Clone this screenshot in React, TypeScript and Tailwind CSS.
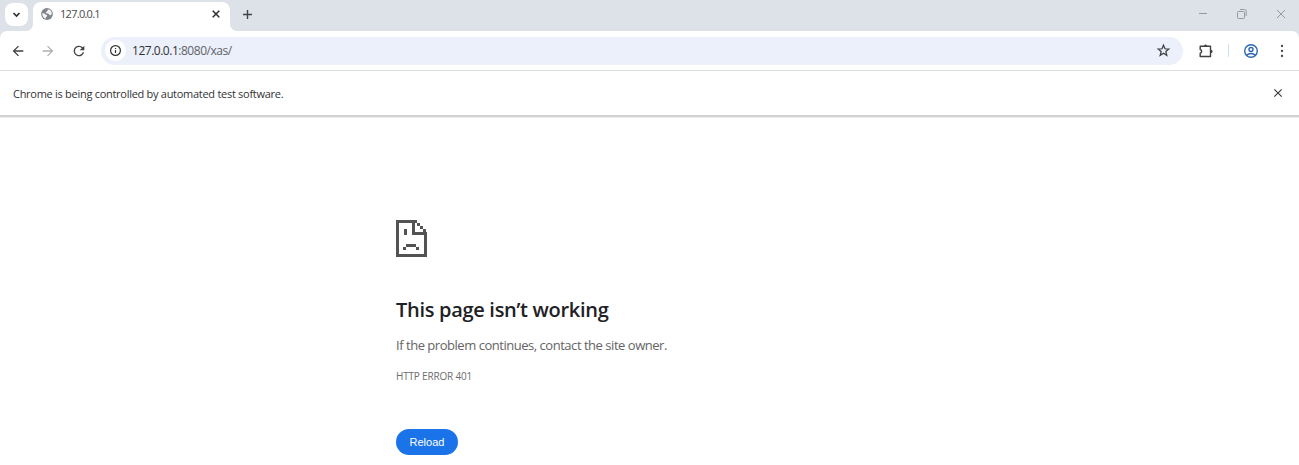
import type { ReactNode } from "react";

function Icon({ size, box = 24, className = "", children }: { size: number; box?: number; className?: string; children: ReactNode }) {
  return (
    <svg width={size} height={size} viewBox={`0 0 ${box} ${box}`} className={`shrink-0 ${className}`} fill="currentColor">
      {children}
    </svg>
  );
}

const CLOSE = "M19 6.41 17.59 5 12 10.59 6.41 5 5 6.41 10.59 12 5 17.59 6.41 19 12 13.41 17.59 19 19 17.59 13.41 12z";

function TabStrip() {
  return (
    <div className="flex h-[31px] items-end bg-[#dde1e8]">
      <div className="mb-[5px] ml-[5px] flex h-[23px] w-[23px] items-center justify-center rounded-[8px] bg-white text-[#303030]">
        <Icon size={9} box={9}>
          <path d="M1.5 3l3 3 3-3" fill="none" stroke="currentColor" strokeWidth="1.7" />
        </Icon>
      </div>
      <svg width="7" height="7" viewBox="0 0 7 7" className="-ml-[2px] shrink-0" fill="#fff"><path d="M7 0v7H0a7 7 0 0 0 7-7z" /></svg>
      <div className="flex h-[29px] w-[197px] items-center rounded-t-[8px] bg-white pr-[8px] pb-[5px] pl-[8px]">
        <Icon size={12} box={20} className="text-[#808387]">
          <circle cx="10" cy="10" r="9.8" />
          <path d="M2 9c3-1 4 0 5 2 2 0 4 1 3 3l-2 1v3C5 17 2 14 2 9zM9 2l4 0c-1 2-3 2-3 4l-2 1c0 2 2 2 4 2 1 1 2 3 4 3l2-2C18 5 14 1 9 2z" fill="#f4f5f6" />
        </Icon>
        <span className="ml-[7px] text-[11px] leading-[14px] tracking-[-0.72px] text-[#4a4a4a]">127.0.0.1</span>
        <Icon size={12} className="ml-auto text-[#242424]"><path d={CLOSE} stroke="currentColor" /></Icon>
      </div>
      <svg width="7" height="7" viewBox="0 0 7 7" className="shrink-0" fill="#fff"><path d="M0 0v7h7a7 7 0 0 1-7-7z" /></svg>
      <Icon size={11} box={11} className="mb-[11px] ml-[5px] text-[#424242]">
        <path d="M5.5 1v9M1 5.5h9" stroke="currentColor" strokeWidth="1.4" />
      </Icon>
      <div className="mr-[12px] mb-[11px] ml-auto flex items-center gap-[27px] text-[#96999e]">
        <Icon size={12} box={12}><path d="M2 5.5h8" stroke="currentColor" /></Icon>
        <Icon size={12} box={12}>
          <path d="M1.5 4.500a1 1 0 0 1 1-1h5a1 1 0 0 1 1 1v5a1 1 0 0 1-1 1h-5a1 1 0 0 1-1-1zM4 1.500h4.500a1.700 1.700 0 0 1 1.700 1.700V8" fill="none" stroke="currentColor" />
        </Icon>
        <Icon size={12} box={12}><path d="M2 2l8 8m0-8l-8 8" stroke="currentColor" /></Icon>
      </div>
    </div>
  );
}

function Toolbar() {
  return (
    <div className="bg-[#dde1e8]">
      <div className="flex h-[40px] items-center rounded-t-[7px] border-b border-[#dcdee2] bg-white text-[#414141]">
        <Icon size={16} className="ml-[10px]"><path d="M20 11H7.83l5.59-5.59L12 4l-8 8 8 8 1.41-1.41L7.83 13H20z" /></Icon>
        <Icon size={16} className="ml-[14px] text-[#aeb0b3]"><path d="m12 4-1.41 1.41L16.17 11H4v2h12.17l-5.58 5.59L12 20l8-8z" /></Icon>
        <Icon size={16} className="ml-[15px]"><path d="M17.65 6.35A7.96 7.96 0 0 0 12 4a8 8 0 1 0 7.73 10h-2.08A6 6 0 1 1 12 6c1.66 0 3.14.69 4.22 1.78L13 11h7V4z" /></Icon>
        <div className="ml-[14px] flex h-[28px] flex-1 items-center rounded-full bg-[#ebf0fa] pr-[12px] pl-[4px]">
          <div className="flex h-[21px] w-[21px] items-center justify-center rounded-full bg-white text-[#333]">
            <Icon size={13} box={13}>
              <circle cx="6.5" cy="6.5" r="4.9" fill="none" stroke="currentColor" strokeWidth="1.2" />
              <path d="M5.9 5.9h1.2v3.2H5.9zM5.9 3.9h1.2v1.2H5.9z" />
            </Icon>
          </div>
          <span className="mt-px ml-[6px] text-[12px] leading-4 tracking-[-0.48px] text-[#5f6368]"><span className="text-[#303134]">127.0.0.1</span>:8080/xas/</span>
          <Icon size={15} className="ml-auto text-[#3c4043]">
            <path d="m12 3.500 2.400 5.700 6.100.5-4.700 4 1.500 6L12 16.500l-5.300 3.200 1.500-6-4.700-4 6.100-.5z" fill="none" stroke="currentColor" strokeWidth="2" />
          </Icon>
        </div>
        <Icon size={16} box={16} className="ml-[15px]">
          <path d="M2.200 3.200h10.300v10.300H2.200v-3.300a1.900 1.900 0 0 0 0-3.700z" fill="none" stroke="currentColor" strokeWidth="1.400" strokeLinejoin="round" />
          <path d="M6 3a1.600 1.600 0 0 1 3.200 0zM13 6.800a1.600 1.600 0 0 1 0 3.200z" />
        </Icon>
        <div className="ml-[14px] h-[13px] w-px bg-[#cddff2]" />
        <Icon size={16} box={16} className="ml-[14px] text-[#2c67af]">
          <g fill="none" stroke="currentColor" strokeWidth="1.4"><circle cx="8" cy="8" r="6.3" /><circle cx="8" cy="6.500" r="2" /><path d="M3.700 12.300c2-2.400 6.600-2.400 8.600 0" /></g>
        </Icon>
        <Icon size={16} className="mr-[9px] ml-[15px]"><circle cx="12" cy="4.500" r="1.700" /><circle cx="12" cy="12" r="1.700" /><circle cx="12" cy="19.500" r="1.700" /></Icon>
      </div>
    </div>
  );
}

export default function App() {
  return (
    <div className="flex h-[465px] w-[1299px] flex-col overflow-hidden bg-white font-['Open_Sans','Noto_Sans',sans-serif]">
      <TabStrip />
      <Toolbar />
      <div className="flex h-[46px] shrink-0 items-center justify-between border-b-2 border-[#d1d2d3] pr-[14px] pl-[13px] shadow-[0_1px_1px_#eeeeee]">
        <span className="mt-[2px] text-[11px] leading-4 tracking-[-0.28px] text-[#333]">Chrome is being controlled by automated test software.</span>
        <Icon size={14} className="text-[#3b3b3b]"><path d={CLOSE} /></Icon>
      </div>
      <main className="ml-[396px] flex flex-col items-start pt-[103px]">
        <svg width="31" height="37" viewBox="0 0 31 37" fill="#535353">
          <path d="M0 0h21v3H3v31h25V15H16V3h3v9h12v25H0zM21 3h3v3h-3zM24 6h3v3h-3zM27 9h3v3h-3zM8 9h3v6H8zM10 24h10v3H10zM7 27h3v3H7zM20 27h3v3h-3z" />
        </svg>
        <h1 className="mt-[39px] text-[20px] leading-[28px] font-semibold tracking-[-0.3px] text-[#202124]">This page isn’t working</h1>
        <p className="mt-[12px] text-[13px] leading-[18px] tracking-[-0.47px] text-[#646464]">If the problem continues, contact the site owner.</p>
        <p className="mt-[14px] text-[10px] leading-[16px] tracking-[-0.18px] text-[#6d6d6d]">HTTP ERROR 401</p>
        <button className="mt-[45px] h-[26px] w-[62px] rounded-full bg-[#1a73e8] font-['Liberation_Sans',Arial,sans-serif] text-[11px] text-white">Reload</button>
      </main>
    </div>
  );
}
